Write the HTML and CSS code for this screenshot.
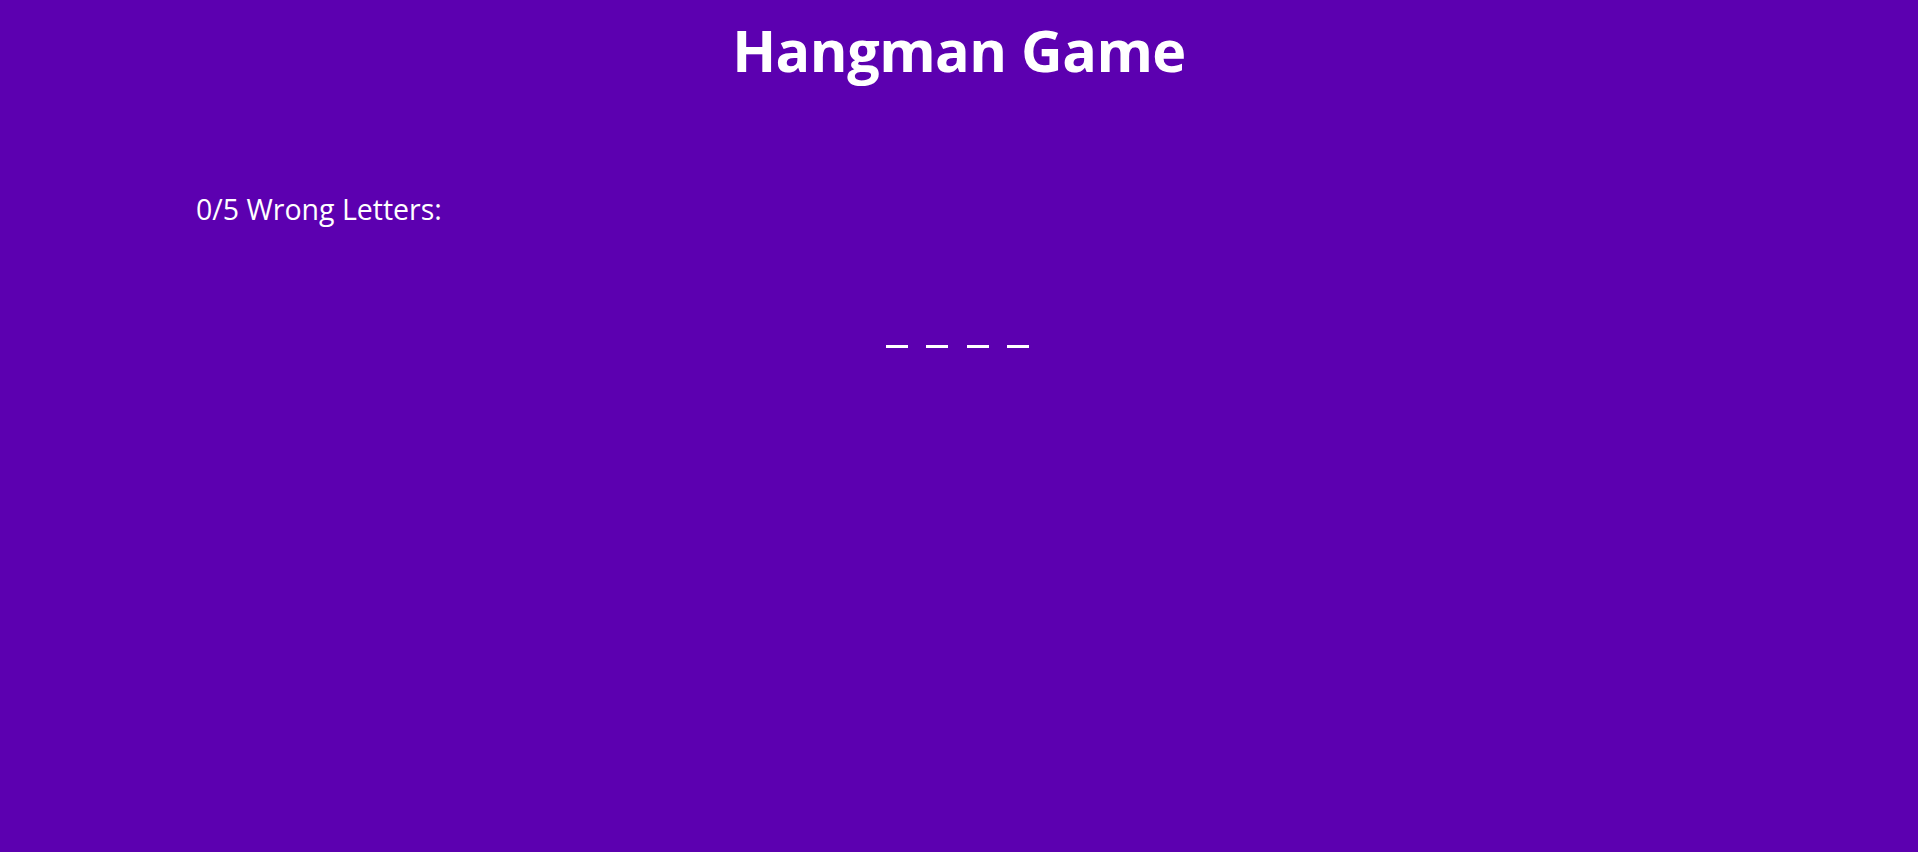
FILE: index.html
```html
<!DOCTYPE html>
<html>
<head>
<meta charset="utf-8">
<link rel="stylesheet" href="styles.css">
</head>
<body>
<h1 class="title">Hangman Game</h1>
<div class="game">
  <div class="wrong">0/5 Wrong Letters:</div>
  <div class="word">
    <span class="slot"></span><span class="slot"></span><span class="slot"></span><span class="slot"></span>
  </div>
</div>
</body>
</html>
```
FILE: styles.css
```css
html, body {
  margin: 0;
  padding: 0;
  height: 100%;
}
body {
  background: #5c00b0;
  color: #ffffff;
  font-family: "Open Sans", "Noto Sans", sans-serif;
}
.title {
  margin: 0;
  padding-top: 14px;
  text-align: center;
  font-size: 57.5px;
  font-weight: 700;
  line-height: 72px;
  letter-spacing: -0.5px;
}
.game {
  padding: 105px 196px 0;
}
.wrong {
  font-size: 28.5px;
  line-height: 36px;
}
.word {
  display: flex;
  justify-content: center;
  gap: 18.5px;
  margin-top: 118px;
  padding-right: 3px;
}
.slot {
  width: 22px;
  height: 3px;
  background: #ffffff;
}
```
